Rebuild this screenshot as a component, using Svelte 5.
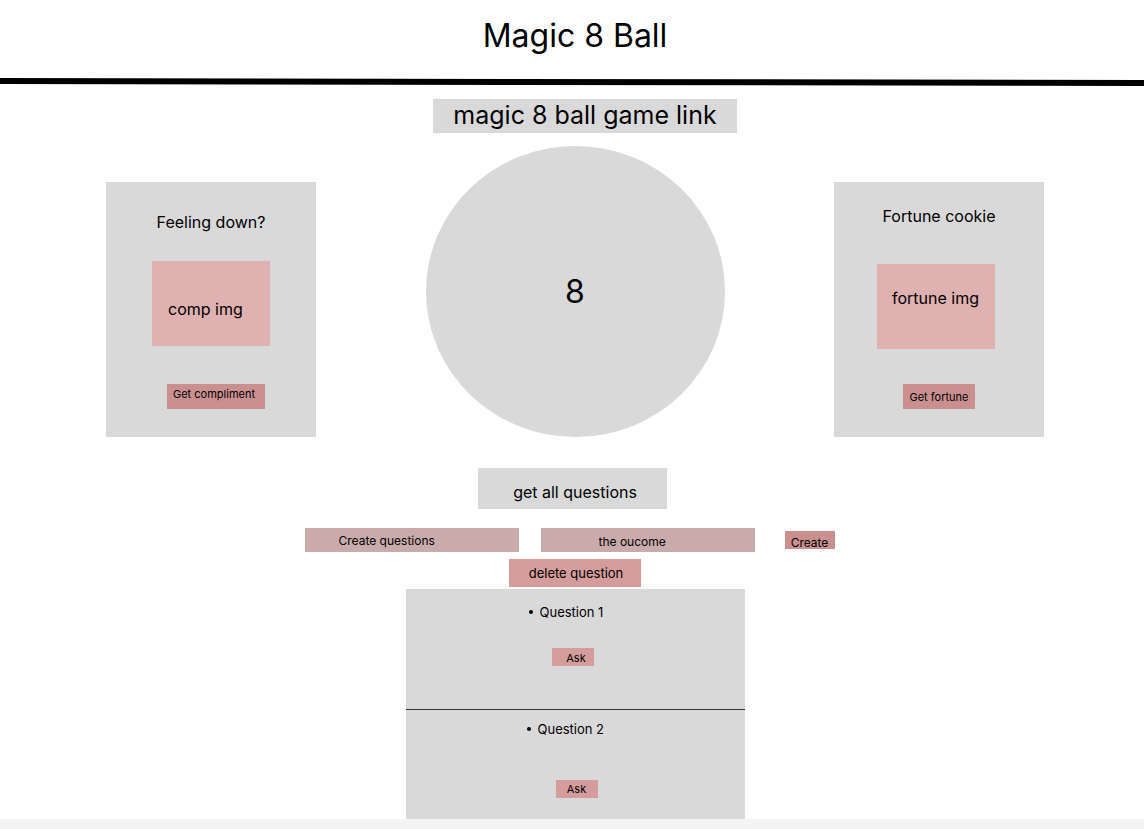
<script>
  let question = $state('Create questions');
  let outcome = $state('the oucome');
</script>

<div class="page">
  <header>
    <h1>Magic 8 Ball</h1>
    <svg class="rule" viewBox="0 0 1144 8" preserveAspectRatio="none" aria-hidden="true">
      <path d="M0 0 L1144 2 V8 L0 6 Z" />
    </svg>
  </header>

  <main>
    <a class="game-link" href="#ball">magic 8 ball game link</a>

    <div class="stage">
      <section class="card compliment">
        <h2>Feeling down?</h2>
        <div class="picture">comp img</div>
        <button>Get compliment</button>
      </section>

      <div class="ball" id="ball">8</div>

      <section class="card fortune">
        <h2>Fortune cookie</h2>
        <div class="picture">fortune img</div>
        <button>Get fortune</button>
      </section>
    </div>

    <button class="all">get all questions</button>

    <form onsubmit={(e) => e.preventDefault()}>
      <input class="question" aria-label="Question" bind:value={question} />
      <input class="outcome" aria-label="Outcome" bind:value={outcome} />
      <button class="create">Create</button>
    </form>

    <button class="delete">delete question</button>

    <ul>
      <li class="first">
        <span class="label">Question 1</span>
        <button>Ask</button>
      </li>
      <li class="second">
        <span class="label">Question 2</span>
        <button>Ask</button>
      </li>
    </ul>
  </main>
</div>

<style>
  :global(body) {
    background: #f4f4f4;
  }

  .page {
    background: #fff;
    color: #000;
    font-family: Inter, sans-serif;
    font-size: 16px;
    margin-bottom: 10px;
  }

  h1,
  h2,
  ul {
    margin: 0;
    padding: 0;
    font-weight: 400;
  }

  h1 {
    padding: 16px 0 22px 6px;
    font-size: 32px;
    line-height: 40px;
    text-align: center;
  }

  .rule {
    display: block;
    width: 100%;
    height: 8px;
  }

  main {
    display: flex;
    flex-direction: column;
    align-items: center;
    padding-left: 6px;
  }

  button,
  input {
    box-sizing: border-box;
    border: 0;
    border-radius: 0;
    margin: 0;
    padding: 0;
    color: inherit;
    font-family: inherit;
  }

  .game-link {
    margin: 13px 0 13px 20px;
    padding: 0 20px 2px;
    background: #d9d9d9;
    color: inherit;
    font-size: 25px;
    line-height: 32px;
    text-decoration: none;
  }

  .stage {
    display: flex;
    justify-content: space-between;
    align-items: flex-end;
    width: calc(100% - 200px);
  }

  .card {
    display: flex;
    flex-direction: column;
    align-items: flex-start;
    box-sizing: border-box;
    width: 210px;
    height: 255px;
    background: #d9d9d9;
  }

  .card h2 {
    align-self: center;
    font-size: 16px;
    line-height: 20px;
  }

  .picture {
    box-sizing: border-box;
    width: 118px;
    height: 85px;
    background: #dfb1b1;
    line-height: 20px;
  }

  .card button {
    height: 25px;
    background: #ca9090;
    font-size: 11px;
    line-height: 13px;
  }

  .compliment h2 {
    padding: 30px 0 29px;
  }

  .compliment .picture {
    margin-left: 46px;
    padding: 38px 0 0 16px;
  }

  .compliment button {
    width: 98px;
    margin: 38px 0 0 61px;
    padding: 0 0 4px 6px;
    text-align: left;
  }

  .fortune h2 {
    padding: 24px 0 38px;
  }

  .fortune .picture {
    margin-left: 43px;
    padding: 24px 0 0 15px;
  }

  .fortune button {
    width: 72px;
    margin: 35px 0 0 69px;
    padding-top: 2px;
  }

  .ball {
    display: flex;
    align-items: center;
    justify-content: center;
    width: 299px;
    height: 291px;
    border-radius: 50%;
    background: #d9d9d9;
    font-size: 32px;
  }

  .all {
    margin: 31px 5px 19px 0;
    padding: 14px 30px 7px 35px;
    background: #d9d9d9;
    font-size: 16px;
    line-height: 20px;
  }

  form {
    display: flex;
    align-items: center;
    margin-right: 11px;
  }

  input {
    width: 214px;
    height: 24px;
    background: #c9abab;
    font-size: 12px;
  }

  .question {
    margin-right: 22px;
    padding-left: 34px;
  }

  .outcome {
    margin-right: 30px;
    padding: 2px 0 0 58px;
  }

  .create {
    width: 50px;
    height: 18px;
    padding-top: 6px;
    background: #ca9090;
    font-size: 12px;
    line-height: 12px;
  }

  .delete {
    margin: 7px 0 2px;
    padding: 6px 18px 6px 20px;
    background: #d59c9c;
    font-size: 13px;
    line-height: 16px;
  }

  ul {
    width: 339px;
    background: #d9d9d9;
    list-style: none;
  }

  li {
    display: flex;
    flex-direction: column;
    align-items: flex-start;
    box-sizing: border-box;
    padding-top: 14px;
    font-size: 13px;
    line-height: 16px;
  }

  .label {
    display: flex;
    align-items: center;
    gap: 7px;
  }

  .label::before {
    content: '';
    width: 4px;
    height: 4px;
    border-radius: 50%;
    background: #000;
  }

  li button {
    width: 42px;
    height: 18px;
    background: #d59c9c;
    font-size: 11px;
    line-height: 13px;
  }

  .first {
    height: 120px;
    padding: 15px 0 0 123px;
  }

  .first button {
    margin: 28px 0 0 23px;
    padding: 2px 0 0 7px;
  }

  .second {
    height: 110px;
    padding: 11px 0 0 121px;
    border-top: 1px solid #333;
  }

  .second button {
    margin: 43px 0 0 29px;
  }
</style>
